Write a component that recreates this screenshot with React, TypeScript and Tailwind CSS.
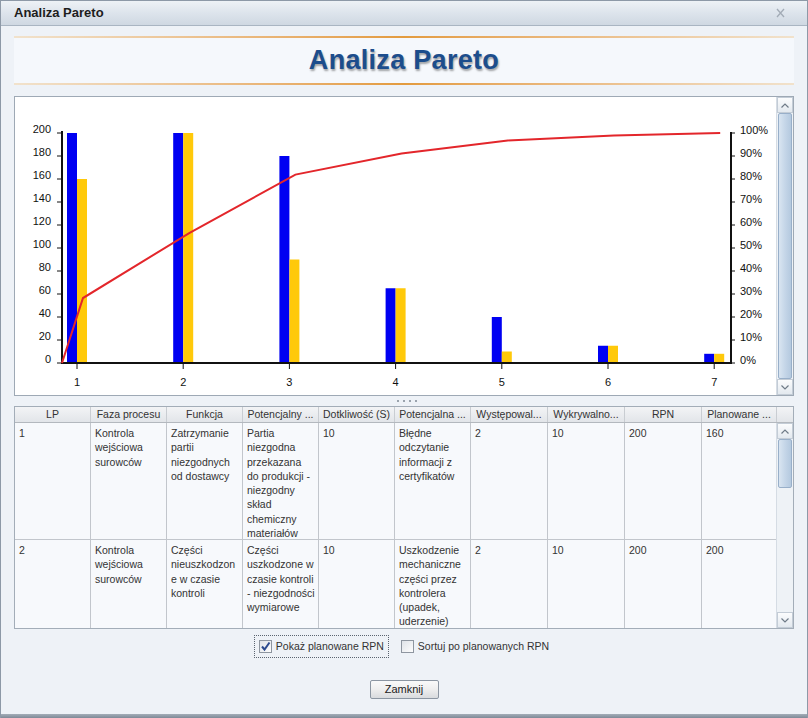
import React from "react";

const rpn = [200, 200, 180, 65, 40, 15, 8];
const planned = [160, 200, 90, 65, 10, 15, 8];

const rows = [
  {
    h: "h-[117px]",
    cells: [
      ["1"],
      ["Kontrola", "wejściowa", "surowców"],
      ["Zatrzymanie", "partii", "niezgodnych", "od dostawcy"],
      ["Partia", "niezgodna", "przekazana", "do produkcji -", "niezgodny", "skład", "chemiczny", "materiałów"],
      ["10"],
      ["Błędne", "odczytanie", "informacji z", "certyfikatów"],
      ["2"],
      ["10"],
      ["200"],
      ["160"],
    ],
  },
  {
    h: "h-[100px]",
    cells: [
      ["2"],
      ["Kontrola", "wejściowa", "surowców"],
      ["Części", "nieuszkodzon", "e w czasie", "kontroli"],
      ["Części", "uszkodzone w", "czasie kontroli", "- niezgodności", "wymiarowe"],
      ["10"],
      ["Uszkodzenie", "mechaniczne", "części przez", "kontrolera", "(upadek,", "uderzenie)"],
      ["2"],
      ["10"],
      ["200"],
      ["200"],
    ],
  },
];

const headers = [
  "LP",
  "Faza procesu",
  "Funkcja",
  "Potencjalny ...",
  "Dotkliwość (S)",
  "Potencjalna ...",
  "Występowal...",
  "Wykrywalno...",
  "RPN",
  "Planowane ...",
];

const colW = [
  "w-[76px]",
  "w-[76px]",
  "w-[76px]",
  "w-[76px]",
  "w-[76px]",
  "w-[76px]",
  "w-[77px]",
  "w-[77px]",
  "w-[77px]",
  "w-[75px]",
];

function Arrow({ up }: { up?: boolean }) {
  return (
    <svg width="8" height="5" viewBox="0 0 8 5">
      <polyline
        points={up ? "0.5,4.5 4,1 7.5,4.5" : "0.5,0.5 4,4 7.5,0.5"}
        fill="none"
        stroke="#6f7b88"
        strokeWidth="1.2"
      />
    </svg>
  );
}

function ScrollBar({ full }: { full?: boolean }) {
  return (
    <div className="w-[17px] shrink-0 flex flex-col bg-[#eef2f6] border-l border-[#d5dce4]">
      <div className="h-[16px] shrink-0 flex items-center justify-center bg-linear-to-b from-[#fbfcfd] to-[#e3e9ef] border border-[#c3ccd6]">
        <Arrow up />
      </div>
      {full ? (
        <div className="flex-1 mx-px bg-linear-to-r from-[#d9e5f1] via-[#c5d6e8] to-[#b4c9df] border border-[#98afc9] rounded-[2px]" />
      ) : (
        <>
          <div className="h-[49px] shrink-0 mx-px bg-linear-to-r from-[#d9e5f1] via-[#c5d6e8] to-[#b4c9df] border border-[#98afc9] rounded-[2px]" />
          <div className="flex-1" />
        </>
      )}
      <div className="h-[16px] shrink-0 flex items-center justify-center bg-linear-to-b from-[#fbfcfd] to-[#e3e9ef] border border-[#c3ccd6]">
        <Arrow />
      </div>
    </div>
  );
}

function ParetoChart() {
  const X0 = 77;
  const DX = 106.2;
  const Y0 = 363;
  const K = 1.15;
  const total = rpn.reduce((a, b) => a + b, 0);
  const xs = rpn.map((_, i) => X0 + i * DX);
  let cum = 0;
  const pts = ["62,363"].concat(
    rpn.map((v, i) => {
      cum += v;
      return `${xs[i] + 6},${Y0 - (cum / total) * 230}`;
    })
  );
  const left = [0, 20, 40, 60, 80, 100, 120, 140, 160, 180, 200];
  const right = [0, 10, 20, 30, 40, 50, 60, 70, 80, 90, 100];

  return (
    <svg width="761" height="298" viewBox="15 97 761 298" className="shrink-0">
      {rpn.map((v, i) => (
        <g key={i}>
          <rect x={xs[i] - 10} y={Y0 - v * K} width="10" height={v * K} fill="#0000f2" />
          <rect x={xs[i]} y={Y0 - planned[i] * K} width="10" height={planned[i] * K} fill="#ffc90a" />
        </g>
      ))}
      <line x1="62" y1="131" x2="62" y2="364" stroke="#111" strokeWidth="2" />
      <line x1="61" y1="363" x2="732" y2="363" stroke="#111" strokeWidth="2" />
      <line x1="731" y1="132" x2="731" y2="364" stroke="#111" strokeWidth="2" />
      {left.map((v) => (
        <g key={v}>
          <line x1="57" y1={Y0 - v * K} x2="62" y2={Y0 - v * K} stroke="#111" strokeWidth="1" />
          <text x="51" y={Y0 - v * K} textAnchor="end" fontSize="11" fontFamily="Liberation Sans, Arial, sans-serif" fill="#111">
            {v}
          </text>
        </g>
      ))}
      {right.map((v) => (
        <g key={v}>
          <line x1="731" y1={Y0 - v * 2.3} x2="735" y2={Y0 - v * 2.3} stroke="#111" strokeWidth="1" />
          <text x="740" y={Y0 - v * 2.3 + 1} fontSize="11" fontFamily="Liberation Sans, Arial, sans-serif" fill="#111">
            {v}%
          </text>
        </g>
      ))}
      {xs.map((x, i) => (
        <g key={i}>
          <line x1={x} y1="363" x2={x} y2="369" stroke="#111" strokeWidth="1" />
          <text x={x} y="386" textAnchor="middle" fontSize="11" fontFamily="Liberation Sans, Arial, sans-serif" fill="#111">
            {i + 1}
          </text>
        </g>
      ))}
      <polyline points={pts.join(" ")} fill="none" stroke="#e3262b" strokeWidth="2" />
    </svg>
  );
}

function CheckBox({ checked }: { checked?: boolean }) {
  return (
    <span className="w-[13px] h-[13px] shrink-0 flex items-center justify-center border border-[#8e96a0] bg-linear-to-br from-[#dfe3e8] to-[#fdfdfd]">
      {checked && (
        <svg width="11" height="11" viewBox="0 0 11 11">
          <path d="M2 5.5 L4.5 8.5 L9.5 1.5" fill="none" stroke="#2b4a8e" strokeWidth="2" />
        </svg>
      )}
    </span>
  );
}

export default function App() {
  return (
    <div className="w-[808px] h-[718px] flex flex-col overflow-hidden bg-[#eef2f7] border-x border-t border-[#8d99a7] font-['Liberation_Sans',Arial,sans-serif] text-[#222]">
      <div className="h-[25px] shrink-0 flex items-center justify-between pl-[13px] pr-[22px] bg-linear-to-b from-[#eef2f6] via-[#dde4ec] to-[#cfd8e2] border-b border-[#a9b5c2]">
        <span className="text-[13px] font-bold text-[#1d1d1d]">Analiza Pareto</span>
        <svg width="9" height="10" viewBox="0 0 9 10">
          <path d="M1 1L8 9M8 1L1 9" stroke="#a2abb6" strokeWidth="1.3" />
        </svg>
      </div>

      <div className="flex-1 flex flex-col px-[13px]">
        <div className="mt-[10px] h-[2px] shrink-0 bg-linear-to-r from-[#f1e2cc] via-[#e39b3e] to-[#f1e2cc]" />
        <div className="h-[45px] shrink-0 flex items-center justify-center bg-[#f5f8fc]">
          <span className="text-[27px] font-bold tracking-[0.3px] text-[#1c4d8c] [text-shadow:1px_2px_2px_rgba(0,0,0,0.35)]">
            Analiza Pareto
          </span>
        </div>
        <div className="h-[2px] shrink-0 bg-linear-to-r from-[#f1e2cc] via-[#e39b3e] to-[#f1e2cc]" />

        <div className="mt-[11px] h-[300px] shrink-0 flex bg-white border border-[#9ea9b5]">
          <ParetoChart />
          <ScrollBar full />
        </div>

        <div className="h-[10px] shrink-0 flex items-center justify-center gap-[4px] pl-[6px]">
          <span className="w-[2px] h-[2px] bg-[#9aa3ad]" />
          <span className="w-[2px] h-[2px] bg-[#9aa3ad]" />
          <span className="w-[2px] h-[2px] bg-[#9aa3ad]" />
          <span className="w-[2px] h-[2px] bg-[#9aa3ad]" />
        </div>

        <div className="h-[223px] shrink-0 flex flex-col border border-[#a3adb8] bg-[#f7f9fc] text-[10.5px] text-[#333]">
          <div className="h-[16px] shrink-0 flex bg-linear-to-b from-[#f3f4f6] to-[#e2e5e9] border-b border-[#b3b8be]">
            {headers.map((h, i) => (
              <div
                key={i}
                className={`${colW[i]} shrink-0 border-r border-[#c9cdd2] flex items-center justify-center whitespace-nowrap leading-[15px]`}
              >
                {h}
              </div>
            ))}
            <div className="flex-1" />
          </div>
          <div className="flex-1 flex min-h-0">
            <div className="w-[761px] shrink-0 flex flex-col overflow-hidden">
              {rows.map((r, ri) => (
                <div key={ri} className={`${r.h} shrink-0 flex border-b border-[#c2c6cc]`}>
                  {r.cells.map((lines, ci) => (
                    <div
                      key={ci}
                      className={`${colW[ci]} shrink-0 border-r border-[#c2c6cc] pl-[4px] pt-[3px] leading-[14.3px] whitespace-nowrap overflow-hidden`}
                    >
                      {lines.map((l, li) => (
                        <div key={li}>{l}</div>
                      ))}
                    </div>
                  ))}
                </div>
              ))}
            </div>
            <ScrollBar />
          </div>
        </div>

        <div className="mt-[6px] h-[23px] shrink-0 flex items-center justify-center gap-[12px] pr-[5px] text-[10.5px] text-[#333]">
          <div className="h-[23px] flex items-center gap-[4px] pl-[4px] pr-[4px] border border-dotted border-[#5b6470]">
            <CheckBox checked />
            <span>Pokaż planowane RPN</span>
          </div>
          <div className="flex items-center gap-[4px]">
            <CheckBox />
            <span>Sortuj po planowanych RPN</span>
          </div>
        </div>

        <div className="mt-[22px] flex justify-center">
          <button className="w-[69px] h-[19px] flex items-center justify-center text-[11px] text-[#222] rounded-[2px] border border-[#8c96a2] bg-linear-to-b from-[#fafafa] via-[#eeeeee] to-[#d9dbde]">
            Zamknij
          </button>
        </div>
      </div>

      <div className="h-[4px] shrink-0 bg-linear-to-b from-[#a3adb8] to-[#7f8a97]" />
    </div>
  );
}
